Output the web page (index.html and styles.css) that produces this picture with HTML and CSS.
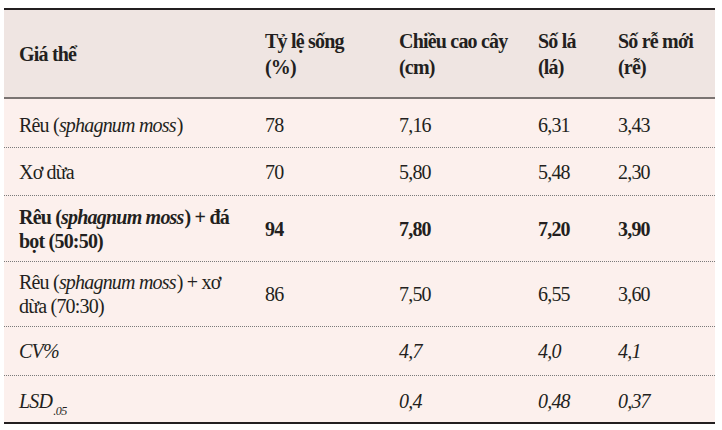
FILE: index.html
```html
<!DOCTYPE html>
<html lang="vi">
<head>
<meta charset="utf-8">
<title>Bảng giá thể</title>
<link rel="stylesheet" href="styles.css">
</head>
<body>
<div class="tbl">
  <div class="row head">
    <div class="c">Giá thể</div>
    <div class="c">Tỷ lệ sống<br>(%)</div>
    <div class="c">Chiều cao cây<br>(cm)</div>
    <div class="c">Số lá<br>(lá)</div>
    <div class="c">Số rễ mới<br>(rễ)</div>
  </div>
  <div class="row r1">
    <div class="c">Rêu (<i class="sp">sphagnum moss</i>)</div>
    <div class="c">78</div>
    <div class="c">7,16</div>
    <div class="c">6,31</div>
    <div class="c">3,43</div>
  </div>
  <div class="row r2">
    <div class="c">Xơ dừa</div>
    <div class="c">70</div>
    <div class="c">5,80</div>
    <div class="c">5,48</div>
    <div class="c">2,30</div>
  </div>
  <div class="row r3 strong">
    <div class="c">Rêu (<i class="sp">sphagnum moss</i>) + đá bọt (50:50)</div>
    <div class="c">94</div>
    <div class="c">7,80</div>
    <div class="c">7,20</div>
    <div class="c">3,90</div>
  </div>
  <div class="row r4">
    <div class="c">Rêu (<i class="sp">sphagnum moss</i>) + xơ dừa (70:30)</div>
    <div class="c">86</div>
    <div class="c">7,50</div>
    <div class="c">6,55</div>
    <div class="c">3,60</div>
  </div>
  <div class="row r5 ital">
    <div class="c">CV%</div>
    <div class="c"></div>
    <div class="c">4,7</div>
    <div class="c">4,0</div>
    <div class="c">4,1</div>
  </div>
  <div class="row r6 ital last">
    <div class="c">LSD<span class="sub">.05</span></div>
    <div class="c"></div>
    <div class="c">0,4</div>
    <div class="c">0,48</div>
    <div class="c">0,37</div>
  </div>
</div>
</body>
</html>
```
FILE: styles.css
```css
html, body {
  margin: 0;
  padding: 0;
  background: #ffffff;
}

body {
  font-family: "Liberation Serif", "Times New Roman", serif;
  font-size: 20px;
  letter-spacing: -0.8px;
  color: #231f20;
}

.tbl {
  width: 711px;
  margin: 8px 0 0 4px;
  border-top: 2px solid #231f20;
  border-bottom: 2px solid #231f20;
}

.row {
  display: grid;
  grid-template-columns: 246px 134px 139px 80px 112px;
  align-items: center;
  box-sizing: border-box;
  background: #fcf0ed;
  border-bottom: 1px dotted #7a7a7a;
  line-height: 24px;
}

.row .c {
  padding-left: 15px;
  padding-right: 6px;
}

.head {
  background: #efe5e2;
  height: 89px;
  border-bottom: 2px solid #7a7472;
  font-weight: bold;
  line-height: 26px;
}

.r1 { height: 49px; padding-top: 3px; }
.r2 { height: 48px; }
.r3 { height: 66px; }
.r4 { height: 65px; }
.r5 { height: 49px; }
.r6 { height: 46px; padding-top: 3px; }

.last {
  border-bottom: none;
}

.strong {
  font-weight: bold;
}

.ital {
  font-style: italic;
}

.sp {
  margin-right: 1px;
}

.sub {
  font-size: 12px;
  letter-spacing: -0.4px;
  vertical-align: -7px;
  line-height: 0;
  margin-left: 1px;
}
```
